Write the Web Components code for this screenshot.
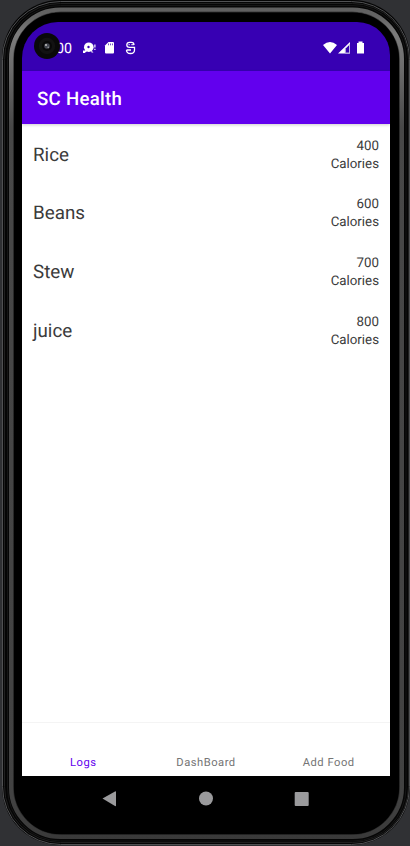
<!DOCTYPE html>
<html lang="en"><head><meta charset="utf-8"><title>SC Health</title>
<style>html,body{margin:0;width:410px;height:846px;overflow:hidden;background:#303134}body{font-family:Roboto,"Noto Sans",sans-serif;text-rendering:geometricPrecision}</style></head>
<body>
<phone-frame>
<status-bar></status-bar>
<app-bar>SC Health</app-bar>
<food-list>
<food-row amount="400">Rice</food-row>
<food-row amount="600">Beans</food-row>
<food-row amount="700">Stew</food-row>
<food-row amount="800">juice</food-row>
</food-list>
<tab-bar><tab-item active>Logs</tab-item><tab-item>DashBoard</tab-item><tab-item>Add Food</tab-item></tab-bar>
<system-nav slot="nav"></system-nav>
</phone-frame>
<script>
function define(name, html) {
  customElements.define(name, class extends HTMLElement {
    constructor() {
      super();
      this.attachShadow({mode: 'open'}).innerHTML = html;
    }
    connectedCallback() {
      const amount = this.shadowRoot.querySelector('.amount');
      if (amount) amount.textContent = this.getAttribute('amount');
    }
  });
}
define('phone-frame', `<style>
:host{display:block;position:relative;width:410px;height:846px;box-sizing:border-box;padding:22px 20px 0 22px}
.shell{position:absolute;inset:0;width:410px;height:846px}
.screen{position:relative;display:flex;flex-direction:column;height:754px;border-radius:36px 33px 0 0;overflow:hidden}
.nav{position:relative}
</style>
<svg class="shell" viewBox="0 0 410 846" fill="none">
<defs><linearGradient id="rim" x1="0" y1="0" x2="0" y2="846" gradientUnits="userSpaceOnUse"><stop offset="0" stop-color="#5c5c5c"/><stop offset=".02" stop-color="#646464"/><stop offset=".04" stop-color="#7c7c7c"/><stop offset=".08" stop-color="#6c6c6c"/><stop offset=".15" stop-color="#484848"/><stop offset=".94" stop-color="#424242"/><stop offset="1" stop-color="#383838"/></linearGradient></defs>
<rect x="2" y="0" width="408" height="845" rx="58" fill="#050505"/>
<rect x="2.5" y="1.500" width="407" height="843" rx="58" stroke="#505153"/>
<rect x="4.500" y="3.500" width="404" height="839" rx="56" stroke="#202020"/>
<rect x="7.500" y="5.500" width="398.500" height="835.500" rx="53" stroke="#151515"/>
<rect x="11.500" y="10" width="390" height="826.500" rx="49" stroke="url(#rim)" stroke-width="5"/>
<rect x="13.500" y="12" width="386" height="822.500" rx="47" stroke="#000" stroke-opacity=".4"/>
<rect x="14" y="12.500" width="385" height="821.500" rx="46.500" fill="#000"/>
</svg>
<div class="screen"><slot></slot></div><div class="nav"><slot name="nav"></slot></div>`);
define('status-bar', `<style>
:host{display:block;position:relative;height:49px;background:#3700b3;flex:none}
svg{position:absolute;left:0;top:0}
.time{position:absolute;left:14.5px;top:18.500px;font-size:14.300px;line-height:17px;color:#fff}
.camera{z-index:1}
</style><span class="time">10:00</span>
<svg class="camera" width="368" height="49" viewBox="22 22 368 49">
<circle cx="47" cy="46" r="13" fill="#090909"/><circle cx="47" cy="46" r="8.2" fill="#121212"/><circle cx="47" cy="46" r="5" fill="#080808"/><circle cx="47" cy="46" r="2.8" fill="#444750"/><circle cx="46" cy="45" r="1.1" fill="#bbb"/><circle cx="48.3" cy="47.3" r=".9" fill="#8a8a90"/>
<g fill="#fff"><circle cx="88.800" cy="47.200" r="4.800"/><path d="M83 50.500h2.200v2.500H83zM85 49.500l2 2-2 1zM91 50l2.500 2.500h-2zM94.300 44.500h1.200v3h-1.200zM94.300 48.700h1.200V50h-1.200z"/><path d="M108.500 42h4.500q1 0 1 1v9.500q0 1-1 1h-7q-1 0-1-1v-7z"/></g>
<circle cx="88.500" cy="47" r="1.200" fill="#3700b3"/><path d="M108.500 43.500v1.800m2-1.800v1.800m2-1.800v1.800" stroke="#3700b3" stroke-width=".7"/>
<path d="M134 45q0-2.700-2.500-2.700h-2q-2.700 0-2.700 2.700 0 2.300 2.700 2.300h5v2.700q0 3.500-4 3.500t-4-3.500M126.500 50H131" stroke="#fff" stroke-width="1.300" fill="none"/><path d="M128.500 44.700h1.300m1.500 0h2.700" stroke="#fff"/>
<path fill="#fff" d="M323 45q7-6 14 0l-7 8.500zM338 53.500L350 42v11.500z"/><path d="M345.300 48.500l4.200-4v8.500h-4.200z" fill="#3700b3" stroke="#c0b5df" stroke-width="1"/><path fill="#fff" d="M358.500 41.500h4V43h1.500v10.500h-7V43h1.500z"/>
</svg>`);
define('app-bar', `<style>:host{display:flex;align-items:center;height:53px;padding:2px 15px 0;box-sizing:border-box;background:#6200ee;color:#fff;font-size:18.6px;font-weight:500;letter-spacing:.3px;flex:none;box-shadow:0 1px 3px #0003;z-index:1}</style><slot></slot>`);
define('food-list', `<style>:host{display:block;flex:1;background:#fff}</style><slot></slot>`);
define('food-row', `<style>:host{display:flex;justify-content:space-between;align-items:center;box-sizing:border-box;height:58.7px;padding:2px 11px 0;color:#3b3b3b;font-size:18.800px}
.energy{text-align:right;font-size:13.300px;line-height:18px;padding-top:2.4px}.name{padding-top:.6px}</style><span class="name"><slot></slot></span><div class="energy"><div class="amount"></div><div>Calories</div></div>`);
define('tab-bar', `<style>:host{display:grid;grid-template-columns:repeat(3,1fr);height:53px;border-top:1px solid #f4f4f4;background:#fff;flex:none}</style><slot></slot>`);
define('tab-item', `<style>:host{display:flex;align-items:flex-end;justify-content:center;padding-bottom:6px;font-size:11.200px;line-height:14px;letter-spacing:.5px;color:#757575}:host([active]){color:#6200ee}</style><slot></slot>`);
define('system-nav', `<style>:host{display:block;height:70px}svg{display:block}</style><svg width="368" height="70" viewBox="22 776 368 70" fill="#9a9a9c"><path d="M102.500 798.500L115 791.500q1-.5 1 .5v13.500q0 1-1 .5z"/><circle cx="206" cy="798.500" r="7"/><rect x="294.700" y="792" width="14" height="14" rx="1"/></svg>`);
</script></body></html>
